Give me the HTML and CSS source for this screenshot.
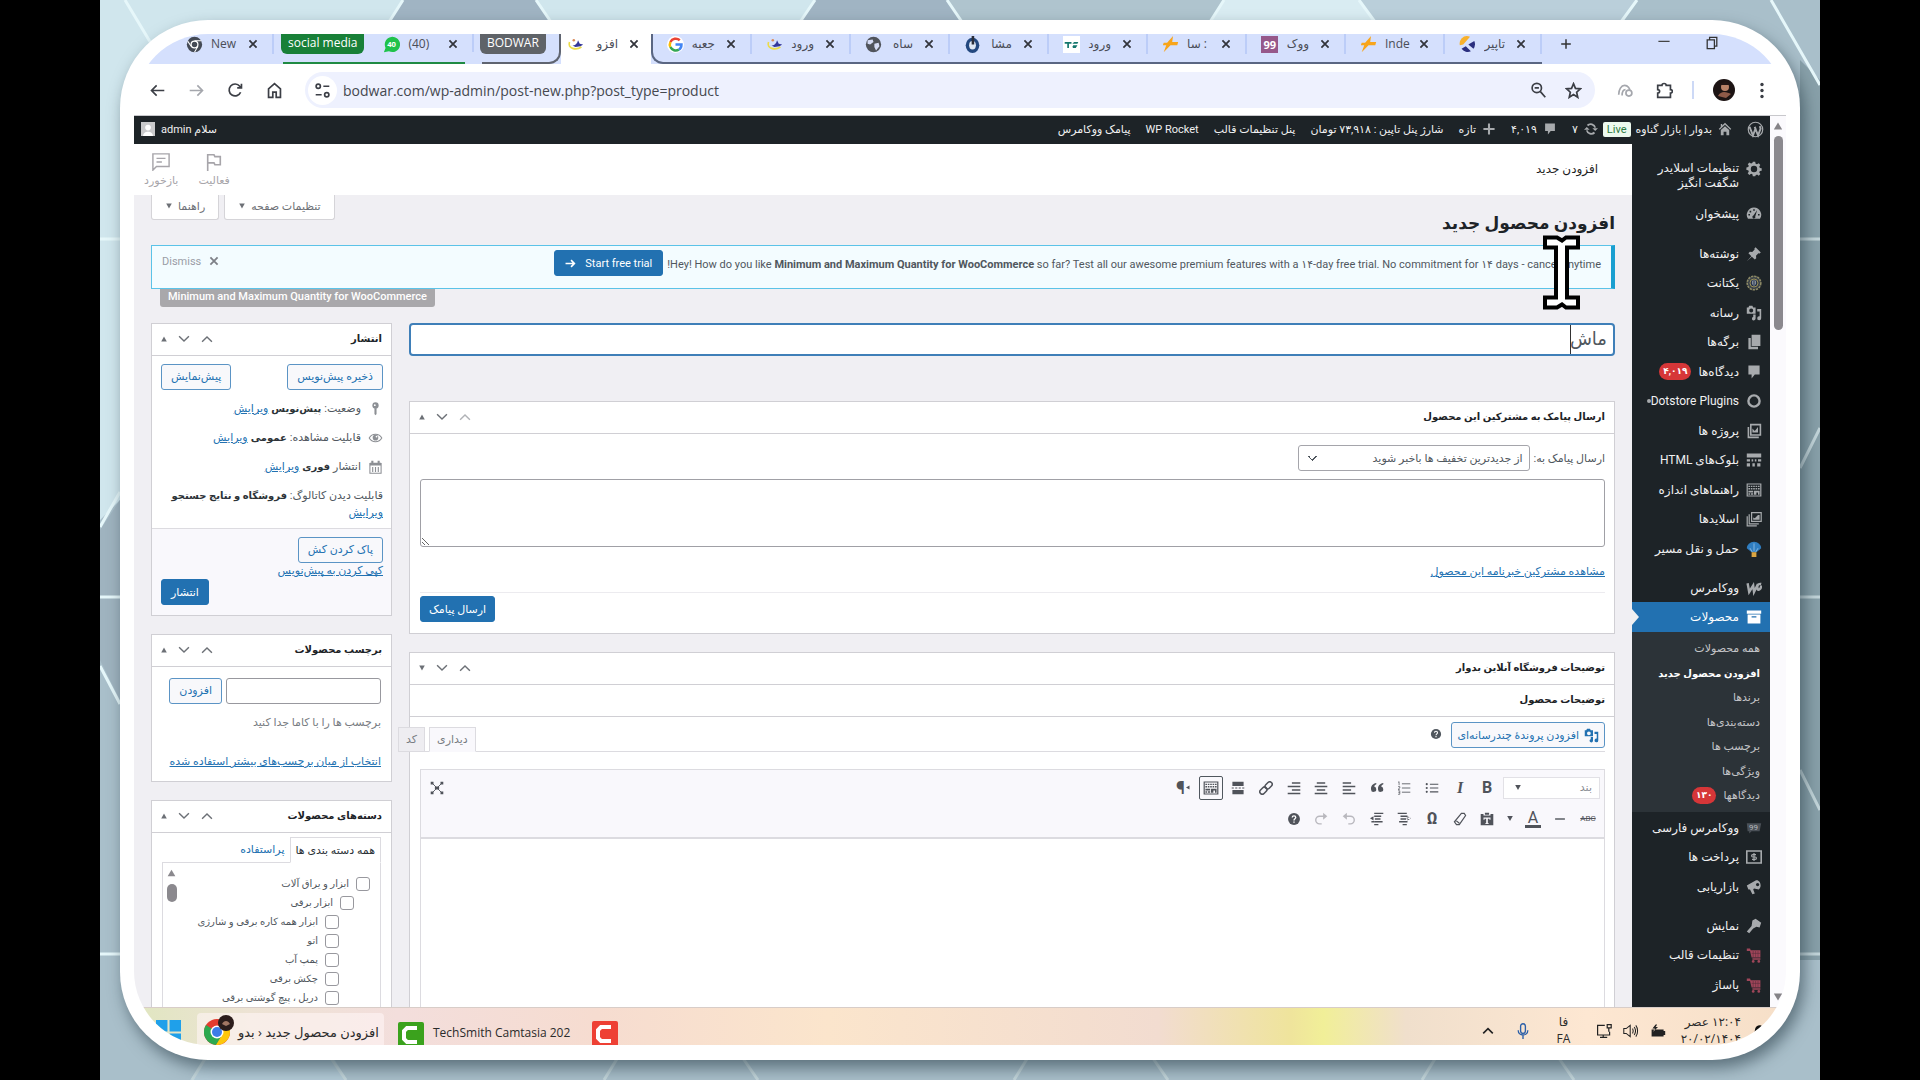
FILE: index.html
```
<!DOCTYPE html>
<html lang="fa">
<head>
  <meta charset="UTF-8" />
  <title>افزودن محصول جدید</title>
  <link rel="stylesheet" href="styles.css">
</head>
<body>
  <svg class="sprite" aria-hidden="true">
    <symbol id="i-up" viewBox="0 0 20 20"><path d="M3 14l7-7 7 7" fill="none" stroke="currentColor" stroke-width="2"/></symbol>
    <symbol id="i-down" viewBox="0 0 20 20"><path d="M3 6l7 7 7-7" fill="none" stroke="currentColor" stroke-width="2"/></symbol>
    <symbol id="i-tri-up" viewBox="0 0 20 20"><path d="M10 4l7 12H3z" fill="currentColor"/></symbol>
    <symbol id="i-tri-down" viewBox="0 0 20 20"><path d="M10 16l7-12H3z" fill="currentColor"/></symbol>
    <symbol id="i-x" viewBox="0 0 20 20"><path d="M4 4l12 12M16 4L4 16" fill="none" stroke="currentColor" stroke-width="3"/></symbol>
    <symbol id="i-gear" viewBox="0 0 20 20"><path fill="currentColor" fill-rule="evenodd" d="M8.500 1h3l.5 2.500 1.700.7L15.900 2.800l2 2.200-1.300 2 .7 1.600 2.300.5v3l-2.300.5-.7 1.700 1.400 2-2.100 2.100-2.100-1.400-1.700.7L11.500 19h-3L8 16.700l-1.700-.7-2.100 1.400L2.100 15.300l1.400-2-.7-1.700L.5 11.100v-3l2.300-.5.7-1.600-1.300-2 2-2.200 2.100 1.400 1.700-.7zM10 6a4 4 0 100 8 4 4 0 000-8z"/></symbol>
    <symbol id="i-dash" viewBox="0 0 20 20"><path fill="currentColor" fill-rule="evenodd" d="M10 2a9 9 0 00-7.500 14h15A9 9 0 0010 2zM9 4h2v2H9zM4.500 6h2v2h-2zM3 10h2v2H3zm12 0h2v2h-2zm-1-5l-2.500 8a1.800 1.800 0 11-2.200-1z"/></symbol>
    <symbol id="i-pin" viewBox="0 0 20 20"><path fill="currentColor" d="M10.500 3l1.500-1.500 6.500 6.500L17 9.500l-1.500-.3-3 3 .3 3L11 17l-3.700-3.700L1 19l5.700-6.300L3 9l1.800-1.800 3 .3 3-3z"/></symbol>
    <symbol id="i-seal" viewBox="0 0 20 20"><circle cx="10" cy="10" r="8.500" fill="#3c434a" stroke="#8d8a66" stroke-width="2" stroke-dasharray="3 1"/><circle cx="10" cy="10" r="5" fill="#1d2a44" stroke="#b7a85a"/><path d="M10 6v8M8 7v5M12 7v5" stroke="#aeb6bd" fill="none"/></symbol>
    <symbol id="i-media" viewBox="0 0 20 20"><path fill="currentColor" fill-rule="evenodd" d="M1 3h2l1-2h4l1 2h3v8H1zm5.500 1.500a2.500 2.500 0 100 5 2.500 2.500 0 000-5zM14 5h5v11.500a2.500 2.500 0 11-2-2.400V8h-3zM9 12h3v5a2.300 2.300 0 11-2-2.300H9z"/></symbol>
    <symbol id="i-pages" viewBox="0 0 20 20"><path fill="currentColor" d="M7 1h11v14H7zM3 5h3v11h9v3H3z"/></symbol>
    <symbol id="i-comment" viewBox="0 0 20 20"><path fill="currentColor" d="M3 2h14v11h-6l-4 5v-5H3z"/></symbol>
    <symbol id="i-ring" viewBox="0 0 20 20"><circle cx="10" cy="10" r="7" fill="none" stroke="currentColor" stroke-width="3"/></symbol>
    <symbol id="i-gallery" viewBox="0 0 20 20"><path d="M6 2h12v13H6zM3 5v13h13" fill="none" stroke="currentColor" stroke-width="2"/><path d="M8 12V7l3 3 4-5v7z" fill="currentColor"/></symbol>
    <symbol id="i-table" viewBox="0 0 20 20"><path fill="currentColor" d="M1 2h18v5H1zm0 7h4v3H1zm6 0h2v3H7zm4 0h2v3h-2zm4 0h4v3h-4zM1 14h4v4H1zm7 0h3v4H8zm6 0h4v4h-4z"/></symbol>
    <symbol id="i-keys" viewBox="0 0 20 20"><path d="M1.500 2.500h17v15h-17z" fill="none" stroke="currentColor" stroke-width="1.500"/><path d="M3 5.500h14M3 8.500h14" stroke="currentColor" stroke-width="1.800" stroke-dasharray="2 1"/><path d="M3 11h6v2H3zm7 0h7v5h-2v-3h-2v3h-3zM3 14h2v2H3zm3 0h3v2H6z" fill="currentColor"/></symbol>
    <symbol id="i-slides" viewBox="0 0 20 20"><path d="M7 2h12v11H7zM4 4v12h12M1.500 6.500v12h12" fill="none" stroke="currentColor" stroke-width="1.500"/><path d="M9 11V8l2 1 4-4h2v6z" fill="currentColor"/></symbol>
    <symbol id="i-balloon" viewBox="0 0 20 20"><path d="M1 9a9 8 0 0118 0l-6 5H7z" fill="#2f7dc0"/><path d="M5 9l3 5M10 3v10M15 9l-3 5" stroke="#9bc4e6" fill="none"/><path d="M7 14h6v6H7z" fill="#d9a441"/></symbol>
    <symbol id="i-woo" viewBox="0 0 20 20"><path d="M2 4l2 11 5-8 1 8 5-10M19 5c-4-1-6 3-4 7 2 1 4-2 4-5" fill="none" stroke="currentColor" stroke-width="3"/></symbol>
    <symbol id="i-archive" viewBox="0 0 20 20"><path fill="currentColor" fill-rule="evenodd" d="M1 2h18v4H1zm1 5h16v11H2zm5 2v1.500h6V9z"/></symbol>
    <symbol id="i-pay" viewBox="0 0 20 20"><path d="M1 2.500h18v15H1z" fill="none" stroke="currentColor" stroke-width="2"/><path d="M12.500 7H8.500a1.500 1.500 0 000 3h3a1.500 1.500 0 010 3h-4M10 5v10" fill="none" stroke="currentColor" stroke-width="1.500"/></symbol>
    <symbol id="i-horn" viewBox="0 0 20 20"><path fill="currentColor" d="M1 8l11-6c5-2 9 7 4 11l-6-1-1 1 2 5-3 1-3-6H3z"/><circle cx="14.500" cy="7" r="2" fill="#1d2327"/></symbol>
    <symbol id="i-brush" viewBox="0 0 20 20"><path fill="currentColor" d="M8 3l4-2 7 5-2 6-4-1-4 2-5 6-3-2 6-7z"/></symbol>
    <symbol id="i-cart" viewBox="0 0 20 20"><path fill="#a0465a" d="M1 2h4l1 2h12v9H7L5 5H1zm7 12h10v2H8z"/><circle cx="9" cy="18" r="1.700" fill="#a0465a"/><circle cx="16" cy="18" r="1.700" fill="#a0465a"/><path d="M9 5v8M12 5v8M15 5v8M7 8h11" stroke="#5a2d3c" stroke-width=".7"/></symbol>
    <symbol id="i-wp" viewBox="0 0 20 20"><circle cx="10" cy="10" r="8.500" fill="none" stroke="currentColor" stroke-width="1.400"/><path d="M3 7l4 10 3-8-1-2M9 7l4 10 3-8-1-3" fill="none" stroke="currentColor" stroke-width="2.200"/></symbol>
    <symbol id="i-home" viewBox="0 0 20 20"><path fill="currentColor" fill-rule="evenodd" d="M10 1l9 9-1.500 1.200L10 4l-7.500 7.200L1 10l3-3V3h2v2zM4 11.500l6-5.500 6 5.500V19h-4v-5H8v5H4z"/></symbol>
    <symbol id="i-sync" viewBox="0 0 20 20"><path d="M4 12a6.500 6.500 0 0011 3M16 8A6.500 6.500 0 005 5" fill="none" stroke="currentColor" stroke-width="2.600"/><path d="M0 11l4-4 4 4zM20 9l-4 4-4-4z" fill="currentColor"/></symbol>
    <symbol id="i-plus" viewBox="0 0 20 20"><path d="M10 2v16M2 10h16" stroke="currentColor" stroke-width="3"/></symbol>
    <symbol id="i-key" viewBox="0 0 20 20"><circle cx="10" cy="5" r="4.500" fill="currentColor"/><circle cx="9" cy="4.500" r="1.300" fill="#fff"/><path d="M8.500 9h3v8L10 19l-1.500-2z" fill="currentColor"/></symbol>
    <symbol id="i-eye" viewBox="0 0 20 20"><path d="M1 10c4-7 14-7 18 0-4 7-14 7-18 0z" fill="none" stroke="currentColor" stroke-width="1.500"/><circle cx="10" cy="9.500" r="4" fill="currentColor"/><circle cx="11.500" cy="8" r="1.300" fill="#fff"/></symbol>
    <symbol id="i-cal" viewBox="0 0 20 20"><path d="M2 5h16v14H2z" fill="none" stroke="currentColor" stroke-width="1.500"/><path d="M2 4h16v4H2zM4 1h3v4H4zm9 0h3v4h-3z" fill="currentColor"/><path d="M6 10v7M10 10v7M14 10v7" stroke="currentColor" stroke-width="1.600"/></symbol>
    <symbol id="i-help" viewBox="0 0 20 20"><circle cx="10" cy="10" r="8.500" fill="currentColor"/><path d="M7.500 8a2.500 2.500 0 115 0c0 1.500-2.500 2-2.500 4M10 13.500v2" fill="none" stroke="#fff" stroke-width="1.900"/></symbol>
    <symbol id="i-ul" viewBox="0 0 20 20"><path d="M7 4.500h12M7 10h12M7 15.500h12" stroke="currentColor" stroke-width="1.500"/><circle cx="2.500" cy="4.500" r="1.500" fill="currentColor"/><circle cx="2.500" cy="10" r="1.500" fill="currentColor"/><circle cx="2.500" cy="15.500" r="1.500" fill="currentColor"/></symbol>
    <symbol id="i-ol" viewBox="0 0 20 20"><path d="M7 4h12M7 10h12M7 16h12" stroke="currentColor" stroke-width="1.200"/><path d="M3 1v5M1.500 2L3 1M1.500 8H4v2L1.500 12H4M1.500 14H4v5H1.500M2 16.500h2" fill="none" stroke="currentColor"/></symbol>
    <symbol id="i-quote" viewBox="0 0 20 20"><path d="M9 3C4 4 1 7 1.500 12a3.700 3.700 0 107.300-1A3.400 3.400 0 006 8c0-1.500 1.500-3 3-3.500zM19 3c-5 1-8 4-7.500 9a3.700 3.700 0 107.300-1A3.400 3.400 0 0016 8c0-1.500 1.500-3 3-3.500z" fill="currentColor"/></symbol>
    <symbol id="i-al" viewBox="0 0 20 20"><path d="M1 3h12M1 8h18M1 13h12M1 18h18" stroke="currentColor" stroke-width="2.200"/></symbol>
    <symbol id="i-ac" viewBox="0 0 20 20"><path d="M4 3h12M1 8h18M4 13h12M1 18h18" stroke="currentColor" stroke-width="2.200"/></symbol>
    <symbol id="i-ar" viewBox="0 0 20 20"><path d="M7 3h12M1 8h18M7 13h12M1 18h18" stroke="currentColor" stroke-width="2.200"/></symbol>
    <symbol id="i-link" viewBox="0 0 20 20"><g transform="rotate(-45 10 10)" fill="none" stroke="currentColor" stroke-width="2.200"><rect x="-1" y="6.500" width="11.500" height="7" rx="3.500"/><rect x="9.500" y="6.500" width="11.500" height="7" rx="3.500"/></g></symbol>
    <symbol id="i-more" viewBox="0 0 20 20"><path d="M2 1h16v6H2zm0 12h16v6H2z" fill="currentColor"/><path d="M1 10h18" stroke="currentColor" stroke-width="1.500" stroke-dasharray="3 2"/></symbol>
    <symbol id="i-full" viewBox="0 0 20 20"><path d="M3 3l14 14M17 3L3 17" stroke="currentColor" stroke-width="1.300"/><path d="M1 1h4v4H1zM15 1h4v4h-4zM1 15h4v4H1zM15 15h4v4h-4zM7 8h6v4H7z" fill="currentColor"/></symbol>
    <symbol id="i-paste" viewBox="0 0 20 20"><path fill="currentColor" fill-rule="evenodd" d="M1 3h4v2h10V3h4v16H1zm6-2h6v3H7zM5 8v3h1.500V9.500h2.300V16H7.500v1.200h5V16h-1.300V9.500h2.300V11H15V8z"/></symbol>
    <symbol id="i-erase" viewBox="0 0 20 20"><path d="M12 2h4l2 3-9 13H5l-3-4zM4 12l5 4" fill="none" stroke="currentColor" stroke-width="1.700"/></symbol>
    <symbol id="i-outdent" viewBox="0 0 20 20"><path d="M1 2h13M5 6h10M5 10h8M3 14h12M8 18h6" stroke="currentColor" stroke-width="2"/><path d="M20 9l-5-3v6zM14 8h5v2h-5z" fill="currentColor"/></symbol>
    <symbol id="i-indent" viewBox="0 0 20 20"><path d="M6 2h13M6 6h10M7 10h8M6 14h12M6 18h6" stroke="currentColor" stroke-width="2"/><path d="M5 6L0 9l5 3zM2 13h4v2H2z" fill="currentColor"/></symbol>
    <symbol id="i-undo" viewBox="0 0 20 20"><path d="M3 6h9a5 5 0 010 11H9" fill="none" stroke="currentColor" stroke-width="2"/><path d="M1 6l6-5v10z" fill="currentColor"/></symbol>
    <symbol id="i-redo" viewBox="0 0 20 20"><path d="M17 6H8a5 5 0 000 11h3" fill="none" stroke="currentColor" stroke-width="2"/><path d="M19 6l-6-5v10z" fill="currentColor"/></symbol>
    <symbol id="i-bodwar" viewBox="0 0 20 20"><path d="M3 7c-3 8 8 10 14 6" fill="none" stroke="#ecdc4a" stroke-width="2"/><path d="M4 10c3 2 6 1 8-2l1-3 2 4 4 1-3 2-6 1z" fill="#33369a"/><circle cx="8" cy="5" r="1.500" fill="#d98a5a"/></symbol>
    <symbol id="i-flash" viewBox="0 0 20 20"><path d="M13 0L6 8H2l-1 3h4l-3 8 8-8h8l1-4h-7z" fill="#f8a51b"/></symbol>
  </svg>

  <main class="stage">
    <svg class="backdrop" viewBox="0 0 1720 1080" preserveAspectRatio="none" aria-hidden="true">
      <path d="M0 0h1720v1080H0z" fill="#a9bfca"/>
      <path d="M0 0H1124V500H20L0 520z" fill="#d0e6ed"/>
      <path d="M303 0h133l14 20H290zM715 0h132l15 20H700z" fill="#a0b4c3"/>
      <path d="M847 0h277l-13 20H862z" fill="#afc4ce"/>
      <path d="M1124 0h135l16 20H1111z" fill="#d9ecf2"/>
      <path d="M1259 0h278l-15 20h-247z" fill="#bacfda"/>
      <path d="M1720 720V80l-20-20v900h20z" fill="#88a0a9"/>
      <path d="M20 500L0 530v130l20 40z" fill="#9fb3bf"/>
      <path d="M105 1060h130l12 20H90z" fill="#b3cad6"/>
      <g fill="none" stroke="#e6f7fa" stroke-width="3">
        <path d="M25 0l30 50M303 0l-14 22M436 0l15 22M715 0l-15 22M847 0l15 22M1124 0l-14 22M1259 0l16 22M1537 0l-16 22M1671 0l49 85"/>
        <path d="M0 239h20M0 527l20-35M0 597h20M0 666l20 38M0 954h20"/>
      </g>
      <g fill="none" stroke="#c3d5da" stroke-width="3">
        <path d="M1700 239h20M1700 468l20-40M1700 597h20M1700 770l20 40M1700 954h20"/>
        <path d="M108 1054l-16 26M228 1054l18 26M520 1054l-16 26M640 1054l18 26M930 1054l-16 26M1050 1054l18 26M1338 1054l-16 26M1456 1054l18 26"/>
      </g>
    </svg>

    <div class="frame">
      <div class="screen">
        <header class="tabstrip">
          <div class="tabs">
            <div class="tab tab-first">
              <svg class="fav" viewBox="0 0 20 20"><circle cx="10" cy="10" r="9" fill="#444a55"/><circle cx="10" cy="10" r="4" fill="#444a55" stroke="#fff" stroke-width="1.500"/><path d="M10 5.500h8M6 12L2 6M14 12l-4 7" stroke="#fff" stroke-width="1.200"/></svg>
              <span class="tab-name">New</span><button class="close" aria-label="بستن"><svg><use href="#i-x"/></svg></button>
            </div>
            <div class="tab-group green">
              <span class="chip">social media</span>
              <svg class="fav" viewBox="0 0 20 20"><path d="M1 19l2-5a9 9 0 114 4z" fill="#1fc24b"/><text x="5" y="13" font-size="9" font-weight="700" fill="#fff">40</text></svg>
              <span class="tab-name">(40)</span><button class="close" aria-label="بستن"><svg><use href="#i-x"/></svg></button>
            </div>
            <span class="divider"></span>
            <div class="tab-group before"><span class="chip">BODWAR</span></div>
            <div class="tab active">
              <svg class="fav"><use href="#i-bodwar"/></svg>
              <span class="tab-name fa">افزو</span><button class="close" aria-label="بستن"><svg><use href="#i-x"/></svg></button>
            </div>
            <div class="tab-group after">
              <div class="tab">
                <svg class="fav" viewBox="0 0 20 20"><circle cx="10" cy="10" r="10" fill="#fff"/><g fill="none" stroke-width="3"><path d="M15 5a7 7 0 00-11 2" stroke="#ea4335"/><path d="M4 7a7 7 0 000 6" stroke="#fbbc05"/><path d="M4 13a7 7 0 0010 3" stroke="#34a853"/><path d="M14 16c2-1 3-3 3-6h-7" stroke="#4285f4"/></g></svg>
                <span class="tab-name fa">جعبه</span><button class="close" aria-label="بستن"><svg><use href="#i-x"/></svg></button>
              </div>
              <div class="tab"><svg class="fav"><use href="#i-bodwar"/></svg><span class="tab-name fa">ورود</span><button class="close" aria-label="بستن"><svg><use href="#i-x"/></svg></button></div>
              <div class="tab">
                <svg class="fav" viewBox="0 0 20 20"><circle cx="10" cy="10" r="9" fill="#50545c"/><path d="M3 5l6-1 1 3-4 3-3-1zM11 9l5-1 1 4-4 5-2-4z" fill="#d5dcf5"/></svg>
                <span class="tab-name fa">ساه</span><button class="close" aria-label="بستن"><svg><use href="#i-x"/></svg></button>
              </div>
              <div class="tab">
                <svg class="fav" viewBox="0 0 20 20"><ellipse cx="10" cy="11" rx="8" ry="9" fill="#23487f"/><ellipse cx="10" cy="11" rx="4" ry="5" fill="#dfe8f5"/><path d="M9 0h3v10H9z" fill="#2c2f3a"/></svg>
                <span class="tab-name fa">مشا</span><button class="close" aria-label="بستن"><svg><use href="#i-x"/></svg></button>
              </div>
              <div class="tab">
                <svg class="fav" viewBox="0 0 20 20"><path d="M0 0h20v20H0z" fill="#fff"/><path d="M2 7h8v2H7v5H5V9H2zM11 9l2-2h5l-1 2zm0 4l1-2h5l-2 3h-3z" fill="#14776d"/></svg>
                <span class="tab-name fa">ورود</span><button class="close" aria-label="بستن"><svg><use href="#i-x"/></svg></button>
              </div>
              <div class="tab"><svg class="fav"><use href="#i-flash"/></svg><span class="tab-name" dir="ltr">سا :</span><button class="close" aria-label="بستن"><svg><use href="#i-x"/></svg></button></div>
              <div class="tab">
                <svg class="fav" viewBox="0 0 20 20"><path d="M0 0h20v20H0z" fill="#96588a"/><text x="3" y="15" font-size="13" font-weight="700" fill="#fff">99</text></svg>
                <span class="tab-name fa">ووک</span><button class="close" aria-label="بستن"><svg><use href="#i-x"/></svg></button>
              </div>
              <div class="tab"><svg class="fav"><use href="#i-flash"/></svg><span class="tab-name">Inde</span><button class="close" aria-label="بستن"><svg><use href="#i-x"/></svg></button></div>
              <div class="tab">
                <svg class="fav" viewBox="0 0 20 20"><path d="M3 3a9 9 0 0110-2l-8 9-4 1a9 9 0 012-8z" fill="#f8b12c"/><path d="M18 6a9 9 0 01-1 9l-6-5z" fill="#2b2f7f"/><path d="M3 15l5-3 6 6a9 9 0 01-11-3z" fill="#2b2f7f"/></svg>
                <span class="tab-name fa">تاپیر</span><button class="close" aria-label="بستن"><svg><use href="#i-x"/></svg></button>
              </div>
            </div>
            <button class="new-tab" aria-label="زبانه تازه"><svg viewBox="0 0 20 20"><path d="M10 2v16M2 10h16" stroke="#333" stroke-width="2.500"/></svg></button>
          </div>
          <div class="window-buttons">
            <svg viewBox="0 0 20 20"><path d="M3 8h14" stroke="#444" stroke-width="1.500"/></svg>
            <svg viewBox="0 0 20 20"><path d="M4 6h9v11H4zM7 6V3h9v11h-3" fill="none" stroke="#333" stroke-width="1.600"/></svg>
          </div>
        </header>

        <nav class="toolbar">
          <svg viewBox="0 0 20 20"><path d="M18 10H3M9 4l-6 6 6 6" class="line"/></svg>
          <svg class="dim" viewBox="0 0 20 20"><path d="M2 10h15M11 4l6 6-6 6" class="line"/></svg>
          <svg viewBox="0 0 20 20"><path d="M16 12a7 7 0 11-1-7l2 2M17 2v5h-5" class="line"/></svg>
          <svg viewBox="0 0 20 20"><path d="M3 8l7-6 7 6v10h-5v-6H8v6H3z" class="line"/></svg>
          <div class="omnibox">
            <span class="site-info"><svg viewBox="0 0 20 20"><path d="M11 5h7M2 15h7" class="line"/><circle cx="5" cy="5" r="2.500" class="line"/><circle cx="15" cy="15" r="2.500" class="line"/></svg></span>
            <input class="url" type="text" aria-label="نشانی" value="bodwar.com/wp-admin/post-new.php?post_type=product">
            <svg viewBox="0 0 20 20"><circle cx="8" cy="7" r="5.500" class="line"/><path d="M12 11l6 7M5.500 7h5" class="line"/></svg>
            <svg viewBox="0 0 20 20"><path d="M10 2l2.300 5.500 5.700.5-4.300 4 1.300 6-5-3.300L5 18l1.300-6L2 8l5.700-.5z" class="line"/></svg>
          </div>
          <svg class="dim" viewBox="0 0 20 20"><path d="M2 15c0-6 3-11 7-11s6 4 6 6M6 16c0-4 1-7 4-7" class="line"/><circle cx="14" cy="13" r="3.500" class="line"/></svg>
          <svg viewBox="0 0 20 20"><path d="M2 4h5c0-3 5-3 5 0h5v5c3 0 3 4 0 4v5H2v-5c3 0 3-4 0-4z" class="line"/></svg>
          <span class="sep"></span>
          <svg class="avatar" viewBox="0 0 22 22"><circle cx="11" cy="11" r="11" fill="#1d1414"/><circle cx="12" cy="8" r="4" fill="#b98268"/><path d="M5 17c3-6 9-4 13-2l-5 4z" fill="#8f5a48"/><path d="M7 6c2-4 8-4 10 0z" fill="#241717"/></svg>
          <svg class="kebab" viewBox="0 0 10 20"><circle cx="5" cy="3" r="2"/><circle cx="5" cy="10" r="2"/><circle cx="5" cy="17" r="2"/></svg>
        </nav>

        <div class="viewport">
          <div class="wp" dir="rtl">
            <div class="adminbar">
              <svg class="wp-logo"><use href="#i-wp"/></svg>
              <a href="#"><svg><use href="#i-home"/></svg>بدوار | بازار گناوه</a>
              <span class="live">Live</span>
              <a href="#"><svg><use href="#i-sync"/></svg>۷</a>
              <a href="#"><svg><use href="#i-comment"/></svg>۴,۰۱۹</a>
              <a href="#"><svg><use href="#i-plus"/></svg>تازه</a>
              <a href="#">شارژ پنل تاپین : ۷۳,۹۱۸ تومان</a>
              <a href="#">پنل تنظیمات قالب</a>
              <a href="#">WP Rocket</a>
              <a href="#">پیامک ووکامرس</a>
              <a class="me" href="#">سلام admin<svg viewBox="0 0 20 20"><path d="M0 0h20v20H0z" fill="#c9cacc"/><circle cx="10" cy="8" r="4" fill="#fff"/><path d="M3 20c0-8 14-8 14 0z" fill="#fff"/></svg></a>
            </div>

            <div class="wp-main">
              <aside class="menu">
                <ul>
                  <li class="two-lines"><a href="#"><svg><use href="#i-gear"/></svg><span>تنظیمات اسلایدر شگفت انگیز</span></a></li>
                  <li><a href="#"><svg><use href="#i-dash"/></svg>پیشخوان</a></li>
                </ul>
                <ul>
                  <li><a href="#"><svg><use href="#i-pin"/></svg>نوشته‌ها</a></li>
                  <li><a href="#"><svg><use href="#i-seal"/></svg>یکتانت</a></li>
                  <li><a href="#"><svg><use href="#i-media"/></svg>رسانه</a></li>
                  <li><a href="#"><svg><use href="#i-pages"/></svg>برگه‌ها</a></li>
                  <li><a href="#"><svg><use href="#i-comment"/></svg>دیدگاه‌ها <b class="count">۴,۰۱۹</b></a></li>
                  <li><a href="#"><svg><use href="#i-ring"/></svg>Dotstore Plugins<i class="dot"></i></a></li>
                  <li><a href="#"><svg><use href="#i-gallery"/></svg>پروژه ها</a></li>
                  <li><a href="#"><svg><use href="#i-table"/></svg>بلوک‌های HTML</a></li>
                  <li><a href="#"><svg><use href="#i-keys"/></svg>راهنماهای اندازه</a></li>
                  <li><a href="#"><svg><use href="#i-slides"/></svg>اسلایدها</a></li>
                  <li><a href="#"><svg><use href="#i-balloon"/></svg>حمل و نقل مسیر</a></li>
                </ul>
                <ul>
                  <li><a href="#"><svg><use href="#i-woo"/></svg>ووکامرس</a></li>
                  <li class="current"><a href="#"><svg><use href="#i-archive"/></svg>محصولات</a></li>
                </ul>
                <ul class="submenu">
                  <li><a href="#">همه محصولات</a></li>
                  <li class="here"><a href="#">افزودن محصول جدید</a></li>
                  <li><a href="#">برندها</a></li>
                  <li><a href="#">دسته‌بندی‌ها</a></li>
                  <li><a href="#">برچسب ها</a></li>
                  <li><a href="#">ویژگی‌ها</a></li>
                  <li><a href="#">دیدگاهها <b class="count">۱۳۰</b></a></li>
                </ul>
                <ul>
                  <li><a href="#"><svg viewBox="0 0 20 20"><path fill="#4a5057" d="M1 4h18l-2 10H7l-3 3v-3H2z"/><text x="15" y="13" font-size="10" fill="#b5b8bc">99</text></svg>ووکامرس فارسی</a></li>
                  <li><a href="#"><svg><use href="#i-pay"/></svg>پرداخت ها</a></li>
                  <li><a href="#"><svg><use href="#i-horn"/></svg>بازاریابی</a></li>
                </ul>
                <ul>
                  <li><a href="#"><svg><use href="#i-brush"/></svg>نمایش</a></li>
                  <li><a href="#"><svg><use href="#i-cart"/></svg>تنظیمات قالب</a></li>
                  <li><a href="#"><svg><use href="#i-cart"/></svg>پاساژ</a></li>
                </ul>
              </aside>

              <div class="content">
                <div class="woo-header">
                  <span class="woo-title">افزودن جدید</span>
                  <div class="woo-actions">
                    <button><svg viewBox="0 0 20 20"><path d="M3 20V2h7l1 2h6v9h-6l-1-2H3" fill="none" stroke="currentColor" stroke-width="1.800"/></svg>فعالیت</button>
                    <button><svg viewBox="0 0 20 20"><path d="M1 19V1h18v14H5zM5 6h10M5 10h6" fill="none" stroke="currentColor" stroke-width="1.600"/></svg>بازخورد</button>
                  </div>
                </div>

                <div class="page">
                  <div class="screen-meta">
                    <button>تنظیمات صفحه<svg><use href="#i-tri-down"/></svg></button>
                    <button>راهنما<svg><use href="#i-tri-down"/></svg></button>
                  </div>
                  <h1>افزودن محصول جدید</h1>

                  <div class="notice">
                    <p dir="ltr">!Hey! How do you like <b>Minimum and Maximum Quantity for WooCommerce</b> so far? Test all our awesome premium features with a ۱۴-day free trial. No commitment for ۱۴ days - cancel anytime</p>
                    <button class="btn primary" dir="ltr"><svg viewBox="0 0 20 20"><path d="M1 10h15M11 4l6 6-6 6" fill="none" stroke="currentColor" stroke-width="3"/></svg>Start free trial</button>
                    <button class="dismiss" dir="ltr">Dismiss<svg><use href="#i-x"/></svg></button>
                  </div>
                  <div class="notice-tag" dir="ltr">Minimum and Maximum Quantity for WooCommerce</div>

                  <div class="columns">
                    <div class="col-main">
                      <div class="title-wrap"><input class="title" type="text" aria-label="نام محصول" value="ماش"><span class="caret"></span></div>

                      <section class="box sms">
                        <div class="box-head"><h2>ارسال پیامک به مشترکین این محصول</h2><span class="handles"><svg class="off"><use href="#i-up"/></svg><svg><use href="#i-down"/></svg><svg class="tri"><use href="#i-tri-up"/></svg></span></div>
                        <div class="box-body">
                          <div class="row">
                            <label for="sms-to">ارسال پیامک به:</label>
                            <select id="sms-to"><option>از جدیدترین تخفیف ها باخبر شوید</option></select>
                          </div>
                          <textarea aria-label="متن پیامک"></textarea>
                          <a class="link" href="#">مشاهده مشترکین خبرنامه این محصول</a>
                          <div class="sms-foot"><button class="btn primary">ارسال پیامک</button></div>
                        </div>
                      </section>

                      <section class="box">
                        <div class="box-head"><h2>توضیحات فروشگاه آنلاین بدوار</h2><span class="handles"><svg><use href="#i-up"/></svg><svg><use href="#i-down"/></svg><svg class="tri"><use href="#i-tri-down"/></svg></span></div>
                        <div class="box-head"><h2>توضیحات محصول</h2></div>
                        <div class="editor">
                          <div class="editor-tools">
                            <button class="btn"><svg><use href="#i-media"/></svg>افزودن پروندهٔ چندرسانه‌ای</button>
                            <svg class="help"><use href="#i-help"/></svg>
                            <div class="editor-tabs"><button class="on">دیداری</button><button>کد</button></div>
                          </div>
                          <div class="mce">
                            <div class="mce-bar">
                              <div class="mce-row">
                                <button class="format"><span>بند</span><svg><use href="#i-tri-down"/></svg></button>
                                <button><b>B</b></button>
                                <button><i class="ital">I</i></button>
                                <button><svg><use href="#i-ul"/></svg></button>
                                <button><svg><use href="#i-ol"/></svg></button>
                                <button><svg><use href="#i-quote"/></svg></button>
                                <button><svg><use href="#i-al"/></svg></button>
                                <button><svg><use href="#i-ac"/></svg></button>
                                <button><svg><use href="#i-ar"/></svg></button>
                                <button><svg><use href="#i-link"/></svg></button>
                                <button><svg><use href="#i-more"/></svg></button>
                                <button class="pressed"><svg><use href="#i-keys"/></svg></button>
                                <button class="para" dir="ltr"><b>¶</b><svg viewBox="0 0 10 20"><path d="M9 5v8L2 9z" fill="currentColor"/></svg></button>
                                <button class="full"><svg><use href="#i-full"/></svg></button>
                              </div>
                              <div class="mce-row">
                                <button class="abc"><s>ABC</s></button>
                                <button><svg viewBox="0 0 20 20"><path d="M3 10h14" stroke="currentColor" stroke-width="2"/></svg></button>
                                <button><span class="color">A</span></button>
                                <button class="drop"><svg><use href="#i-tri-down"/></svg></button>
                                <button><svg><use href="#i-paste"/></svg></button>
                                <button><svg><use href="#i-erase"/></svg></button>
                                <button><b>Ω</b></button>
                                <button><svg><use href="#i-outdent"/></svg></button>
                                <button><svg><use href="#i-indent"/></svg></button>
                                <button class="off"><svg><use href="#i-undo"/></svg></button>
                                <button class="off"><svg><use href="#i-redo"/></svg></button>
                                <button><svg><use href="#i-help"/></svg></button>
                              </div>
                            </div>
                            <div class="mce-area"></div>
                          </div>
                        </div>
                      </section>
                    </div>

                    <div class="col-side">
                      <section class="box">
                        <div class="box-head"><h2>انتشار</h2><span class="handles"><svg><use href="#i-up"/></svg><svg><use href="#i-down"/></svg><svg class="tri"><use href="#i-tri-up"/></svg></span></div>
                        <div class="publish">
                          <div class="split"><button class="btn">ذخیره پیش‌نویس</button><button class="btn">پیش‌نمایش</button></div>
                          <p><svg><use href="#i-key"/></svg>وضعیت: <b>پیش‌نویس</b> <a href="#">ویرایش</a></p>
                          <p><svg><use href="#i-eye"/></svg>قابلیت مشاهده: <b>عمومی</b> <a href="#">ویرایش</a></p>
                          <p><svg><use href="#i-cal"/></svg>انتشار <b>فوری</b> <a href="#">ویرایش</a></p>
                          <p class="catalog">قابلیت دیدن کاتالوگ: <b>فروشگاه و نتایج جستجو</b> <a href="#">ویرایش</a></p>
                        </div>
                        <div class="publish-foot">
                          <button class="btn">پاک کردن کش</button>
                          <a class="link" href="#">کپی کردن به پیش‌نویس</a>
                          <button class="btn primary go">انتشار</button>
                        </div>
                      </section>

                      <section class="box">
                        <div class="box-head"><h2>برچسب محصولات</h2><span class="handles"><svg><use href="#i-up"/></svg><svg><use href="#i-down"/></svg><svg class="tri"><use href="#i-tri-up"/></svg></span></div>
                        <div class="tags">
                          <div class="add-tag"><input type="text" aria-label="برچسب محصولات"><button class="btn">افزودن</button></div>
                          <p>برچسب ها را با کاما جدا کنید</p>
                          <a class="link" href="#">انتخاب از میان برچسب‌های بیشتر استفاده شده</a>
                        </div>
                      </section>

                      <section class="box">
                        <div class="box-head"><h2>دسته‌های محصولات</h2><span class="handles"><svg><use href="#i-up"/></svg><svg><use href="#i-down"/></svg><svg class="tri"><use href="#i-tri-up"/></svg></span></div>
                        <div class="cats">
                          <div class="cat-tabs"><a class="on" href="#">همه دسته بندی ها</a><a href="#">پراستفاده</a></div>
                          <div class="cat-panel">
                            <div class="cat-list">
                              <label><input type="checkbox">ابزار و یراق آلات</label>
                              <label class="l1"><input type="checkbox">ابزار برقی</label>
                              <label class="l2"><input type="checkbox">ابزار همه کاره برقی و شارژی</label>
                              <label class="l2"><input type="checkbox">اتو</label>
                              <label class="l2"><input type="checkbox">پمپ آب</label>
                              <label class="l2"><input type="checkbox">چکش برقی</label>
                              <label class="l2"><input type="checkbox">دریل ، پیچ گوشتی برقی</label>
                            </div>
                            <div class="mini-scroll"><svg><use href="#i-tri-up"/></svg><span></span></div>
                          </div>
                        </div>
                      </section>
                    </div>
                  </div>
                </div>
              </div>
            </div>
          </div>
          <div class="scrollbar"><svg><use href="#i-tri-up"/></svg><span></span><svg class="end"><use href="#i-tri-down"/></svg></div>
        </div>

        <footer class="taskbar">
          <svg class="start" viewBox="0 0 24 24"><path d="M0 0h11v11H0zM13 0h11v11H13zM0 13h11v11H0zM13 13h11v11H13z" fill="#1fa0ea"/></svg>
          <button class="task running">
            <svg viewBox="0 0 30 30"><circle cx="13" cy="17" r="13" fill="#e33b2e"/><path d="M13 17L2 10a13 13 0 0010 20l7-10z" fill="#2da94f"/><path d="M13 17h13a13 13 0 01-14 13l6-10z" fill="#fdc70c"/><path d="M13 11h12a13 13 0 011 6l-7 3z" fill="#fdc70c"/><circle cx="13" cy="17" r="6.500" fill="#fff"/><circle cx="13" cy="17" r="5" fill="#3c7ce8"/><circle cx="22" cy="8" r="8" fill="#2b1d1c"/><path d="M18 9c2-4 6-4 8 0l-4 2z" fill="#a27764"/></svg>
            <span dir="rtl">افزودن محصول جدید ‹ بدو</span>
          </button>
          <button class="task">
            <svg viewBox="0 0 26 26"><rect width="26" height="26" rx="2" fill="#3ba21d"/><path d="M19 6H9L6 9v8l3 3h10" fill="none" stroke="#fff" stroke-width="4"/></svg>
            <span>TechSmith Camtasia 202</span>
          </button>
          <svg class="rec" viewBox="0 0 26 26"><rect width="26" height="26" rx="2" fill="#ee4034"/><path d="M19 6H9L6 9v8l3 3h10" fill="none" stroke="#fff" stroke-width="4"/></svg>
          <div class="tray">
            <svg viewBox="0 0 20 20"><path d="M4 13l6-6 6 6" fill="none" stroke="#222" stroke-width="2"/></svg>
            <svg class="mic" viewBox="0 0 20 20"><path d="M7 4a3 3 0 016 0v6a3 3 0 01-6 0zM4 9c0 8 12 8 12 0M10 15v5" fill="none" stroke="#2b5fa8" stroke-width="1.700"/></svg>
            <span class="lang">فا<br>FA</span>
            <svg viewBox="0 0 20 20"><path d="M11 3H2v12h15v-4M5 18h9M9 15v3M14 2h5v4h-5zM16 6v5" fill="none" stroke="#222" stroke-width="1.500"/></svg>
            <svg viewBox="0 0 20 20"><path d="M1 7h3l5-4v14l-5-4H1zM12 7c1 2 1 4 0 6M14 5c2 3 2 7 0 10M16 3c3 4 3 10 0 14" fill="none" stroke="#222" stroke-width="1.300"/></svg>
            <svg viewBox="0 0 20 20"><path d="M2 8h15v9H2zM17 10h2v5h-2zM7 2L3 7h3l-2 4 6-6H7l2-3z" fill="#222"/></svg>
            <span class="clock" dir="rtl">۱۲:۰۴ عصر<br><span dir="ltr">۲۰/۰۲/۱۴۰۴</span></span>
            <svg class="bell" viewBox="0 0 20 20"><path d="M1 16c4-3 1-9 5-12 3-2 6-1 8 1v8l2 3zM7 17h5l-2 3z" fill="#111"/><path d="M9 8h5l-5 5h5" fill="none" stroke="#f0e0d0" stroke-width="1.300"/></svg>
          </div>
        </footer>
      </div>
    </div>

    <svg class="ibeam" viewBox="0 0 37 74" aria-hidden="true"><path d="M2 2h12l5 3 4-3h12v10H24v50h11v10H23l-4-3-5 3H2V62h11V12H2z" fill="#fff" stroke="#000" stroke-width="4"/></svg>
  </main>
</body>
</html>
```

FILE: styles.css
```
* {
  box-sizing: border-box;
}

body {
  margin: 0;
  background: #000;
  font-family: Roboto, "DejaVu Sans", sans-serif;
  font-size: 11px;
  color: #50575e;
}

button, input, select, textarea {
  font: inherit;
  color: inherit;
  margin: 0;
}

button {
  border: 0;
  padding: 0;
  background: none;
}

svg {
  flex: none;
  display: block;
}

.sprite {
  position: absolute;
  width: 0;
  height: 0;
}

/* backdrop and frame */
.stage {
  position: relative;
  height: 100vh;
  margin: 0 100px;
  padding: 20px;
  overflow: hidden;
}

.backdrop {
  position: absolute;
  inset: 0;
  width: 100%;
  height: 100%;
}

.frame {
  position: relative;
  height: 100%;
  padding: 14px 14px 15px;
  background: #fff;
  border-radius: 88px;
  box-shadow: 4px 8px 16px rgba(30, 50, 60, 0.55);
}

.screen {
  display: flex;
  flex-direction: column;
  height: 100%;
  overflow: hidden;
  border-radius: 74px;
  background: #fff;
}

.ibeam {
  position: absolute;
  right: 240px;
  top: 235px;
  width: 37px;
  height: 75px;
}

/* browser */
.tabstrip {
  display: flex;
  justify-content: space-between;
  height: 30px;
  background: #d5e0fd;
  font-family: "Open Sans", "DejaVu Sans", sans-serif;
  font-size: 12px;
}

.tabs {
  display: flex;
}

.tab {
  display: flex;
  align-items: center;
  width: 99px;
  height: 20px;
  padding: 0 13px 0 14px;
  border-right: 2px solid #bccdf8;
}

.tab-first {
  width: 140px;
  padding-left: 52px;
}

.divider {
  width: 2px;
  height: 18px;
  margin-right: 8px;
  background: #bccdf8;
}

.fav {
  width: 17px;
  height: 17px;
}

.tab-name {
  flex: 1;
  width: 0;
  height: 18px;
  margin-left: 8px;
  overflow: hidden;
  white-space: nowrap;
  color: #4a4d57;
}

.tab-name.fa {
  direction: rtl;
  margin-right: 10px;
}

.close {
  width: 12px;
  height: 12px;
}

.close svg, .new-tab svg {
  width: 12px;
  height: 12px;
  color: #33353c;
}

.tab-group {
  display: flex;
}

.green {
  align-items: center;
  width: 182px;
  margin: 0 7px 0 9px;
  padding-bottom: 8px;
  border-bottom: 2px solid #1f8a43;
}

.green .fav {
  margin-left: 19px;
}

.green .close {
  margin-right: 6px;
}

.chip {
  height: 20px;
  margin-left: -2px;
  padding: 0 7px;
  line-height: 18px;
  border-radius: 0 0 6px 6px;
  background: #188038;
  color: #fff;
}

.before {
  width: 79px;
  border-bottom: 2px solid #5f6470;
  border-right: 2px solid #5f6470;
  border-radius: 0 0 12px 0;
  background: #d5e0fd;
}

.before .chip {
  background: #5f6368;
}

.tab.active {
  width: 90px;
  height: 30px;
  padding: 0 11px 10px 6px;
  border: 0;
  background: #fff;
}

.after {
  border-bottom: 2px solid #5a6682;
  border-left: 2px solid #5a6682;
  border-radius: 0 0 0 12px;
}

.after .tab:last-child {
  width: 97px;
}

.new-tab {
  width: 40px;
  height: 20px;
  padding-left: 18px;
}

.window-buttons {
  display: flex;
  gap: 32px;
  padding-right: 66px;
}

.window-buttons svg {
  width: 16px;
  height: 18px;
}

.toolbar {
  display: flex;
  align-items: center;
  height: 52px;
  padding: 1px 19px 0 15px;
  gap: 22px;
  border-bottom: 1px solid #c8c8cc;
  color: #3c3f46;
}

.toolbar svg {
  width: 17px;
  height: 17px;
}

.line {
  fill: none;
  stroke: currentColor;
  stroke-width: 2;
}

.dim {
  color: #a5a7ad;
}

.omnibox {
  display: flex;
  flex: 1;
  align-items: center;
  gap: 18px;
  height: 36px;
  padding: 0 13px 0 3px;
  border-radius: 18px;
  background: #eef1fe;
}

.site-info {
  padding: 6px;
  border-radius: 50%;
  background: #fff;
}

.url {
  flex: 1;
  min-width: 0;
  margin-left: -14px;
  border: 0;
  background: none;
  font-family: "Open Sans", sans-serif;
  font-size: 14px;
  color: #45484f;
}

.sep {
  width: 2px;
  height: 18px;
  margin: 0 -3px;
  background: #cdd9f6;
}

.toolbar .avatar {
  width: 22px;
  height: 22px;
}

.toolbar .kebab {
  width: 10px;
  fill: #3c3f46;
}

.viewport {
  display: flex;
  flex: 1;
  min-height: 0;
}

.scrollbar {
  display: flex;
  flex-direction: column;
  align-items: center;
  width: 16px;
  padding: 4px 0;
  background: #fbfafd;
  color: #858387;
}

.scrollbar svg {
  width: 12px;
  height: 12px;
}

.scrollbar span {
  width: 9px;
  height: 194px;
  margin-top: 4px;
  border-radius: 5px;
  background: #8b898e;
}

.scrollbar .end {
  margin-top: auto;
}

/* wordpress */
.wp {
  display: flex;
  flex: 1;
  flex-direction: column;
  min-width: 0;
}

.adminbar {
  display: flex;
  align-items: center;
  height: 28px;
  padding: 0 6px 2px 7px;
  gap: 15px;
  background: #1d2327;
  color: #f0f0f1;
}

.adminbar a {
  display: flex;
  align-items: center;
  gap: 6px;
  color: inherit;
  text-decoration: none;
  white-space: nowrap;
}

.adminbar svg {
  width: 14px;
  height: 14px;
  color: #a7aaad;
}

.adminbar .wp-logo {
  width: 17px;
  height: 17px;
}

.live {
  margin: 0 -10px;
  padding: 1px 4px;
  border-radius: 2px;
  background: #edfaef;
  color: #2c7a3f;
}

.adminbar .me {
  margin-right: auto;
}

.wp-main {
  display: flex;
  flex: 1;
  min-height: 0;
}

.menu {
  width: 138px;
  padding-top: 8px;
  background: #1d2327;
  color: #f0f0f1;
  font-size: 12px;
}

.menu ul {
  list-style: none;
  margin: 0 0 10px;
  padding: 0;
}

.menu li {
  position: relative;
  display: flex;
  align-items: center;
  height: 29px;
  padding: 0 8px;
}

.menu li:nth-child(even) {
  height: 30px;
}

.menu li.two-lines {
  height: 47px;
  line-height: 15px;
}

.two-lines svg {
  align-self: flex-start;
}

.menu a {
  display: flex;
  align-items: center;
  gap: 7px;
  color: inherit;
  text-decoration: none;
  white-space: nowrap;
}

.menu .two-lines a {
  white-space: normal;
}

.menu svg {
  width: 16px;
  height: 16px;
  color: #a7aaad;
}

.count {
  padding: 0 4px;
  line-height: 17px;
  border-radius: 9px;
  background: #d63638;
  color: #fff;
  font-size: 9px;
}

.dot {
  width: 4px;
  height: 4px;
  margin-right: -7px;
  border-radius: 50%;
  background: #a7aaad;
}

.menu .current {
  background: #2271b1;
  color: #fff;
}

.menu .current svg {
  color: #fff;
}

.current::after {
  content: "";
  position: absolute;
  left: 0;
  top: 7px;
  border: 8px solid transparent;
  border-width: 8px 0 8px 7px;
  border-left-color: #f0f0f1;
}

.menu .submenu {
  margin: -10px 0 1px;
  padding: 4px 0;
  background: #2c3338;
  color: #c3c4c7;
  font-size: 11px;
}

.menu .submenu li {
  height: 25px;
  padding: 0 10px;
}

.menu .submenu li:nth-child(even) {
  height: 24px;
}

.menu .here {
  color: #fff;
  font-size: 10px;
  font-weight: 700;
}

.content {
  display: flex;
  flex: 1;
  flex-direction: column;
  min-width: 0;
  background: #f0eff3;
}

.woo-header {
  display: flex;
  justify-content: space-between;
  height: 51px;
  padding: 0 34px 0 10px;
  background: #fff;
}

.woo-title {
  line-height: 50px;
  font-size: 12px;
  color: #1e1e1e;
}

.woo-actions {
  display: flex;
  gap: 20px;
}

.woo-actions button {
  display: flex;
  flex-direction: column;
  align-items: center;
  justify-content: center;
  gap: 3px;
  color: #a7a5aa;
}

.woo-actions svg {
  width: 18px;
  height: 18px;
}

.page {
  flex: 1;
  min-height: 0;
  padding: 0 17px;
  overflow: hidden;
}

.screen-meta {
  float: left;
  display: flex;
  gap: 5px;
}

.screen-meta button {
  display: flex;
  align-items: center;
  gap: 5px;
  height: 25px;
  padding: 0 13px 2px;
  border: 1px solid #d5d4d8;
  border-top: 0;
  border-radius: 0 0 3px 3px;
  background: #fff;
  color: #6d7076;
}

.screen-meta svg {
  width: 8px;
  height: 8px;
}

h1 {
  margin: 0;
  padding-top: 12px;
  height: 50px;
  line-height: 32px;
  font-size: 17px;
  font-weight: 700;
  color: #1d2327;
}

.notice {
  display: flex;
  align-items: flex-start;
  height: 44px;
  padding: 4px 10px;
  gap: 4px;
  border: 1px solid #5bc3e8;
  border-right: 4px solid #1a9fd0;
  background: #f3fcff;
}

.notice p {
  margin: 0;
  line-height: 30px;
  white-space: nowrap;
}

.notice .btn {
  gap: 9px;
  padding: 0 10px;
}

.notice .btn svg {
  width: 11px;
  height: 11px;
}

.dismiss {
  display: flex;
  align-items: center;
  gap: 7px;
  height: 22px;
  margin-right: auto;
  color: #9a9da6;
}

.dismiss svg {
  width: 12px;
  height: 12px;
  color: #7d8087;
}

.notice-tag {
  float: left;
  height: 18px;
  margin-left: 9px;
  padding: 0 8px;
  line-height: 16px;
  border-radius: 0 0 3px 3px;
  background: #a9a8ab;
  color: #fff;
  font-weight: 500;
}

.columns {
  display: flex;
  clear: both;
  gap: 17px;
  padding-top: 16px;
}

.col-main {
  flex: 1;
  min-width: 0;
}

.col-side {
  width: 241px;
}

.title-wrap {
  position: relative;
  margin-bottom: 45px;
}

.title {
  display: block;
  width: 100%;
  height: 33px;
  padding: 0 6px 2px;
  border: 2px solid #3f7fb8;
  border-radius: 4px;
  background: #fff;
  font-size: 18px;
}

.caret {
  position: absolute;
  right: 44px;
  top: 2px;
  width: 1px;
  height: 29px;
  background: #333;
}

.box {
  margin-bottom: 18px;
  border: 1px solid #d0cfd4;
  background: #fff;
}

.box-head {
  display: flex;
  align-items: center;
  justify-content: space-between;
  height: 32px;
  padding: 0 9px 2px 8px;
  border-bottom: 1px solid #d0cfd4;
}

h2 {
  margin: 0;
  font-size: 10px;
  font-weight: 700;
  color: #1d2327;
}

.handles {
  display: flex;
  align-items: center;
  gap: 9px;
  color: #6c7076;
}

.handles svg {
  width: 14px;
  height: 14px;
}

.handles .off {
  color: #b0b2b6;
}

.handles .tri {
  width: 8px;
  height: 8px;
}

.box-body {
  padding: 11px 9px 11px 10px;
}

.row {
  display: flex;
  align-items: center;
  gap: 4px;
  margin-bottom: 8px;
}

select {
  width: 232px;
  height: 26px;
  padding: 0 6px 0 22px;
  border: 1px solid #a5a5ab;
  border-radius: 3px;
  appearance: none;
  background: linear-gradient(45deg, transparent 46%, #50575e 46%, #50575e 60%, transparent 60%) 9px 10px / 5px 5px no-repeat,
    linear-gradient(-45deg, transparent 46%, #50575e 46%, #50575e 60%, transparent 60%) 13px 10px / 5px 5px no-repeat, #fff;
}

textarea {
  display: block;
  width: 100%;
  height: 68px;
  border: 1px solid #a0a0a6;
  border-radius: 3px;
  resize: vertical;
}

a {
  color: #2271b1;
}

.link {
  display: block;
  text-decoration: underline;
}

.sms .link {
  height: 45px;
  line-height: 50px;
}

.sms-foot {
  display: flex;
  justify-content: flex-end;
  padding-top: 3px;
  border-top: 1px solid #ecebef;
}

.btn {
  display: inline-flex;
  align-items: center;
  height: 26px;
  padding: 0 9px 1px;
  border: 1px solid #5b94c5;
  border-radius: 3px;
  background: #f8f8fb;
  color: #2271b1;
  white-space: nowrap;
}

.primary {
  padding: 0 8px;
  border-color: #2271b1;
  background: #2271b1;
  color: #fff;
}

.editor {
  padding: 5px 9px 0 10px;
}

.editor-tools {
  display: flex;
  align-items: flex-start;
  height: 30px;
  margin-bottom: 17px;
  border-bottom: 1px solid #dcdbe0;
}

.editor-tools .btn {
  gap: 5px;
  padding: 0 5px;
}

.editor-tools svg {
  width: 15px;
  height: 15px;
}

.editor-tools .help {
  width: 12px;
  height: 12px;
  margin: 6px 9px 0 0;
}

.editor-tabs {
  display: flex;
  gap: 4px;
  margin: 5px auto 0 -22px;
}

.editor-tabs button {
  height: 25px;
  padding: 0 7px;
  border: 1px solid #dcdbe0;
  background: #eeedf1;
  color: #787c82;
}

.editor-tabs .on {
  border-bottom-color: #f9f8fc;
  background: #f9f8fc;
}

.mce {
  border: 1px solid #dcdbe0;
}

.mce-bar {
  height: 69px;
  padding: 2px 4px;
  border-bottom: 2px solid #dcdbe0;
  background: #f9f8fc;
}

.mce-row {
  display: flex;
  align-items: center;
  height: 31px;
  gap: 3px;
}

.mce-row button {
  display: flex;
  align-items: center;
  justify-content: center;
  width: 24px;
  height: 24px;
  font-size: 16px;
  color: #50535a;
}

.mce-row button + button {
  margin-right: 1px;
}

.mce-row button:nth-child(3n) {
  margin-right: 0;
}

.mce-row svg {
  width: 14px;
  height: 14px;
}

.mce-row button.format {
  justify-content: space-between;
  width: 97px;
  height: 22px;
  padding: 0 7px 0 10px;
  border: 1px solid #e2e1e6;
  background: #fff;
  font-size: 11px;
  color: #8a8d93;
}

.mce-row .format svg, .mce-row .drop svg {
  width: 8px;
  height: 9px;
  color: #50535a;
}

.mce-row .pressed {
  border: 1px solid #50575e;
  border-radius: 2px;
}

.mce-row .pressed svg {
  width: 16px;
  height: 16px;
}

.mce-row button.para {
  font-size: 18px;
}

.mce-row .para svg {
  width: 5px;
}

.ital {
  font-family: "Liberation Serif", serif;
  font-weight: 700;
}

.mce-row button.full {
  margin-right: auto;
}

.mce-row button.abc {
  font-size: 8px;
}

.mce-row button.drop {
  width: 14px;
}

.color {
  width: 16px;
  line-height: 15px;
  border-bottom: 3px solid #50535a;
}

.mce-row .off {
  color: #b9b8be;
}

.mce-area {
  height: 300px;
}

/* side column */
.publish {
  padding: 8px 8px 0 9px;
}

.split {
  display: flex;
  justify-content: space-between;
  margin-bottom: 4px;
}

.publish p {
  display: flex;
  align-items: center;
  gap: 3px;
  height: 29px;
  margin: 0;
  white-space: nowrap;
}

.publish b {
  font-size: 10px;
  color: #2c3338;
}

.publish p svg {
  width: 15px;
  height: 14px;
  margin-left: 4px;
  color: #8c8f94;
}

.publish p.catalog {
  display: block;
  height: 47px;
  padding-top: 6px;
  line-height: 17px;
  white-space: normal;
}

.publish-foot {
  display: flex;
  flex-direction: column;
  align-items: flex-start;
  height: 87px;
  padding: 8px 8px 8px 9px;
  border-top: 1px solid #dcdbe0;
  background: #f9f8fc;
}

.publish-foot .link {
  line-height: 16px;
}

.publish-foot .go {
  align-self: flex-end;
  padding: 0 9px;
}

.tags {
  height: 114px;
  padding: 11px 10px;
}

.add-tag {
  display: flex;
  gap: 4px;
}

.add-tag input {
  width: 155px;
  height: 26px;
  border: 1px solid #98989e;
  border-radius: 3px;
}

.tags p {
  margin: 0;
  line-height: 38px;
  color: #787c82;
}

.tags .link {
  line-height: 40px;
  white-space: nowrap;
}

.cats {
  padding: 4px 10px 0;
}

.cat-tabs {
  display: flex;
  height: 26px;
}

.cat-tabs a {
  padding: 0 5px;
  line-height: 25px;
  text-decoration: none;
}

.cat-tabs .on {
  position: relative;
  border: 1px solid #dcdbe0;
  border-bottom-color: #fff;
  background: #fff;
  color: #2c3338;
}

.cat-panel {
  display: flex;
  justify-content: space-between;
  height: 200px;
  margin-top: -1px;
  padding: 11px 10px 0 3px;
  border: 1px solid #dcdbe0;
}

.cat-list {
  font-size: 10px;
}

.cat-list label {
  display: flex;
  align-items: center;
  gap: 7px;
  height: 19px;
  white-space: nowrap;
}

.cat-list input {
  appearance: none;
  width: 14px;
  height: 14px;
  border: 1px solid #98989e;
  border-radius: 3px;
}

.l1 {
  margin-right: 16px;
}

.l2 {
  margin-right: 31px;
}

.mini-scroll {
  margin-top: -7px;
  color: #8b898e;
}

.mini-scroll svg {
  width: 11px;
  height: 12px;
}

.mini-scroll span {
  display: block;
  width: 10px;
  height: 18px;
  margin-top: 5px;
  border-radius: 5px;
  background: #8b898e;
}

/* taskbar */
.taskbar {
  display: flex;
  height: 38px;
  padding: 5px 0 0 22px;
  border-top: 1px solid #d8cdc8;
  background: linear-gradient(90deg, #e0e6c0, #ede3d4 7%, #f3dedc 16%, #f6dcd0 28%, #fbe5cc 42%, #f2dcd0 62%, #efe49c 70%, #f1ef98 72%, #f0dfcc 77%, #fde7d2 88%, #f6dfc8);
  font-family: "Open Sans", "DejaVu Sans", sans-serif;
  font-size: 12px;
  color: #2b2b2b;
}

.start {
  width: 25px;
  height: 25px;
  margin: 7px 16px 0 0;
}

.task {
  display: flex;
  align-items: center;
  gap: 9px;
  height: 38px;
  margin-right: 22px;
  white-space: nowrap;
}

.task svg, .rec {
  width: 26px;
  height: 26px;
  margin-top: 6px;
}

.rec {
  margin-top: 8px;
}

.running {
  width: 187px;
  margin-right: 14px;
  padding: 0 8px 0 7px;
  gap: 4px;
  border-radius: 4px;
  background: rgba(255, 245, 245, 0.6);
  font-size: 13px;
}

.running svg {
  width: 30px;
  height: 30px;
  margin-top: -4px;
}

.tray {
  display: flex;
  gap: 11px;
  margin-left: auto;
  padding-right: 18px;
}

.tray svg {
  width: 16px;
  height: 16px;
  margin-top: 10px;
}

.tray .mic {
  margin-left: 8px;
}

.lang {
  width: 43px;
  line-height: 17px;
  text-align: center;
}

.clock {
  width: 64px;
  line-height: 17px;
  white-space: nowrap;
}
```
